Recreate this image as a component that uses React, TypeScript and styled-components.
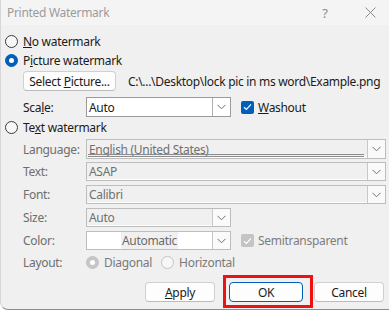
import styled, { createGlobalStyle } from 'styled-components';

const GlobalStyle = createGlobalStyle`
  html, body {
    margin: 0;
    padding: 0;
    background: #ffffff;
  }
  body {
    font-family: "Noto Sans", "Open Sans", sans-serif;
    font-size: 12px;
    letter-spacing: -0.3px;
    color: #1b1b1b;
  }
`;

const Dialog = styled.div`
  width: 389px;
  height: 310px;
  box-sizing: border-box;
  background: #f0f0f0;
  border-bottom: 1px solid #8c8c8c;
  border-left: 1px solid #d6d6d6;
  border-bottom-left-radius: 8px;
  display: flex;
  flex-direction: column;
  overflow: hidden;
`;

const TitleBar = styled.div`
  height: 25px;
  flex-shrink: 0;
  background: #f4f4f4;
  display: flex;
  align-items: center;
  padding-left: 6px;
  color: #9b9b9b;
`;

const TitleText = styled.span`
  flex: 1;
`;

const TitleButton = styled.span<{ $w: number; $mr?: number }>`
  width: ${p => p.$w}px;
  margin-right: ${p => p.$mr ?? 0}px;
  display: flex;
  justify-content: center;
  align-items: center;
  color: #8a8a8a;
  font-size: 13px;
`;

const Body = styled.div`
  padding: 7px 3px 0 4px;
  display: flex;
  flex-direction: column;
`;

const Row = styled.div<{ $h: number; $mt?: number; $indent?: boolean }>`
  height: ${p => p.$h}px;
  margin-top: ${p => p.$mt ?? 0}px;
  padding-left: ${p => (p.$indent ? 18 : 0)}px;
  display: flex;
  align-items: center;
`;

const RadioCircle = styled.span<{ $checked?: boolean; $disabled?: boolean }>`
  width: 13px;
  height: 13px;
  box-sizing: border-box;
  border-radius: 50%;
  flex-shrink: 0;
  display: flex;
  align-items: center;
  justify-content: center;
  border: 1px solid ${p => (p.$disabled ? '#c2c2c2' : p.$checked ? '#005fb8' : '#3a3a3a')};
  background: ${p => (p.$checked ? (p.$disabled ? '#c6c6c6' : '#005fb8') : '#f7f7f7')};
  &::after {
    content: '';
    display: ${p => (p.$checked ? 'block' : 'none')};
    width: 5px;
    height: 5px;
    border-radius: 50%;
    background: #ffffff;
  }
`;

const OptionLabel = styled.span<{ $disabled?: boolean }>`
  margin-left: 5px;
  color: ${p => (p.$disabled ? '#7a7a7a' : '#1b1b1b')};
`;

const Label = styled.span<{ $disabled?: boolean }>`
  width: 63px;
  flex-shrink: 0;
  color: ${p => (p.$disabled ? '#6e6e6e' : '#1b1b1b')};
`;

const PushButton = styled.button<{ $w: number; $primary?: boolean; $drop?: boolean }>`
  width: ${p => p.$w}px;
  height: 20px;
  margin-top: ${p => (p.$drop ? 7 : 0)}px;
  box-sizing: border-box;
  padding: 0;
  font: inherit;
  letter-spacing: inherit;
  color: #1b1b1b;
  background: #fdfdfd;
  border: 1px solid ${p => (p.$primary ? '#005fb8' : '#d0d0d0')};
  border-bottom-color: ${p => (p.$primary ? '#005fb8' : '#bcbcbc')};
  border-radius: 4px;
  display: flex;
  align-items: center;
  justify-content: center;
  white-space: nowrap;
`;

const PathText = styled.span`
  margin-left: 12px;
  white-space: nowrap;
`;

const Combo = styled.div<{ $w?: number; $h: number; $disabled?: boolean; $white?: boolean }>`
  width: ${p => (p.$w ? `${p.$w}px` : 'auto')};
  flex: ${p => (p.$w ? '0 0 auto' : '1')};
  height: ${p => p.$h}px;
  box-sizing: border-box;
  display: flex;
  border: 1px solid ${p => (p.$disabled ? '#bdbdbd' : '#9a9a9a')};
  background: ${p => (p.$disabled && !p.$white ? '#f0f0f0' : '#ffffff')};
  box-shadow: ${p => (p.$disabled && !p.$white ? 'inset 0 -1px 0 #ffffff' : 'none')};
`;

const ComboValue = styled.div<{ $disabled?: boolean; $center?: boolean; $ruled?: boolean }>`
  flex: 1;
  display: flex;
  align-items: center;
  justify-content: ${p => (p.$center ? 'center' : 'flex-start')};
  padding-left: ${p => (p.$center ? 0 : 2)}px;
  color: ${p => (p.$disabled ? '#707070' : '#1b1b1b')};
  position: relative;
  ${p =>
    p.$ruled &&
    `
    &::after {
      content: '';
      position: absolute;
      left: 1px;
      right: 3px;
      bottom: 1px;
      height: 1px;
      border-top: 1px solid #8c8c8c;
      border-bottom: 1px solid #8c8c8c;
    }
  `}
`;

const Highlight = styled.span`
  background: #f0f0f0;
  padding: 0 1px;
  color: #6a6a6a;
`;

const ComboArrow = styled.div<{ $disabled?: boolean }>`
  width: 17px;
  flex-shrink: 0;
  display: flex;
  align-items: center;
  justify-content: center;
  border-left: 1px solid ${p => (p.$disabled ? '#c8c8c8' : '#b0b0b0')};
  background: ${p => (p.$disabled ? '#fafafa' : '#ffffff')};
`;

const CheckBox = styled.span<{ $disabled?: boolean }>`
  width: 13px;
  height: 13px;
  margin-left: 10px;
  border-radius: 2px;
  flex-shrink: 0;
  display: flex;
  align-items: center;
  justify-content: center;
  background: ${p => (p.$disabled ? '#c4c4c4' : '#005fb8')};
`;

const CheckText = styled.span<{ $disabled?: boolean }>`
  margin-left: 4px;
  color: ${p => (p.$disabled ? '#7d7d7d' : '#1b1b1b')};
`;

const LayoutOption = styled.span<{ $mr?: number }>`
  display: flex;
  align-items: center;
  margin-right: ${p => p.$mr ?? 0}px;
`;

const ButtonBar = styled.div`
  margin-top: 3px;
  display: flex;
  align-items: flex-start;
  justify-content: flex-end;
  padding-right: 2px;
`;

const Highlighter = styled.div`
  margin: 0 1px 0 8px;
  padding: 4px 7px 3px 3px;
  border: 3px solid #ee1111;
`;

const Chevron = () => (
  <svg width="9" height="6" viewBox="0 0 9 6">
    <polyline points="0.5,0.8 4.5,4.8 8.5,0.8" fill="none" stroke="#6f6f6f" strokeWidth="1" />
  </svg>
);

const Check = () => (
  <svg width="9" height="8" viewBox="0 0 9 8">
    <polyline points="1,4.2 3.4,6.4 8,1.4" fill="none" stroke="#ffffff" strokeWidth="1.2" />
  </svg>
);

const CloseGlyph = () => (
  <svg width="11" height="11" viewBox="0 0 11 11">
    <path d="M0.5 0.5 L10.5 10.5 M10.5 0.5 L0.5 10.5" stroke="#8a8a8a" strokeWidth="1" />
  </svg>
);

export default function App() {
  return (
    <>
      <GlobalStyle />
      <Dialog>
        <TitleBar>
          <TitleText>Printed Watermark</TitleText>
          <TitleButton $w={18} $mr={17}>?</TitleButton>
          <TitleButton $w={38}>
            <CloseGlyph />
          </TitleButton>
        </TitleBar>
        <Body>
          <Row $h={19}>
            <RadioCircle />
            <OptionLabel>
              <u>N</u>o watermark
            </OptionLabel>
          </Row>
          <Row $h={19}>
            <RadioCircle $checked />
            <OptionLabel>
              P<u>i</u>cture watermark
            </OptionLabel>
          </Row>
          <Row $h={20} $mt={1} $indent>
            <PushButton $w={93}>
              Select&nbsp;<u>P</u>icture...
            </PushButton>
            <PathText>C:\...\Desktop\lock pic in ms word\Example.png</PathText>
          </Row>
          <Row $h={20} $mt={6} $indent>
            <Label>
              Sca<u>l</u>e:
            </Label>
            <Combo $w={145} $h={20}>
              <ComboValue>Auto</ComboValue>
              <ComboArrow>
                <Chevron />
              </ComboArrow>
            </Combo>
            <CheckBox>
              <Check />
            </CheckBox>
            <CheckText>
              <u>W</u>ashout
            </CheckText>
          </Row>
          <Row $h={19} $mt={1}>
            <RadioCircle />
            <OptionLabel>
              Te<u>x</u>t watermark
            </OptionLabel>
          </Row>
          <Row $h={20} $mt={2} $indent>
            <Label $disabled>Language:</Label>
            <Combo $h={20} $disabled>
              <ComboValue $disabled $ruled>
                English (United States)
              </ComboValue>
              <ComboArrow $disabled>
                <Chevron />
              </ComboArrow>
            </Combo>
          </Row>
          <Row $h={19} $mt={3} $indent>
            <Label $disabled>Text:</Label>
            <Combo $h={19} $disabled>
              <ComboValue $disabled>ASAP</ComboValue>
              <ComboArrow $disabled>
                <Chevron />
              </ComboArrow>
            </Combo>
          </Row>
          <Row $h={19} $mt={4} $indent>
            <Label $disabled>Font:</Label>
            <Combo $h={19} $disabled>
              <ComboValue $disabled>Calibri</ComboValue>
              <ComboArrow $disabled>
                <Chevron />
              </ComboArrow>
            </Combo>
          </Row>
          <Row $h={19} $mt={4} $indent>
            <Label $disabled>Size:</Label>
            <Combo $w={145} $h={19} $disabled>
              <ComboValue $disabled>Auto</ComboValue>
              <ComboArrow $disabled>
                <Chevron />
              </ComboArrow>
            </Combo>
          </Row>
          <Row $h={19} $mt={4} $indent>
            <Label $disabled>Color:</Label>
            <Combo $w={145} $h={19} $disabled $white>
              <ComboValue $disabled $center>
                <Highlight>Automatic</Highlight>
              </ComboValue>
              <ComboArrow $disabled>
                <Chevron />
              </ComboArrow>
            </Combo>
            <CheckBox $disabled>
              <Check />
            </CheckBox>
            <CheckText $disabled>Semitransparent</CheckText>
          </Row>
          <Row $h={20} $mt={2} $indent>
            <Label $disabled>Layout:</Label>
            <LayoutOption $mr={9}>
              <RadioCircle $checked $disabled />
              <OptionLabel $disabled>Diagonal</OptionLabel>
            </LayoutOption>
            <LayoutOption>
              <RadioCircle $disabled />
              <OptionLabel $disabled>Horizontal</OptionLabel>
            </LayoutOption>
          </Row>
          <ButtonBar>
            <PushButton $w={70} $drop>
              <u>A</u>pply
            </PushButton>
            <Highlighter>
              <PushButton $w={74} $primary>
                OK
              </PushButton>
            </Highlighter>
            <PushButton $w={70} $drop>
              Cancel
            </PushButton>
          </ButtonBar>
        </Body>
      </Dialog>
    </>
  );
}
